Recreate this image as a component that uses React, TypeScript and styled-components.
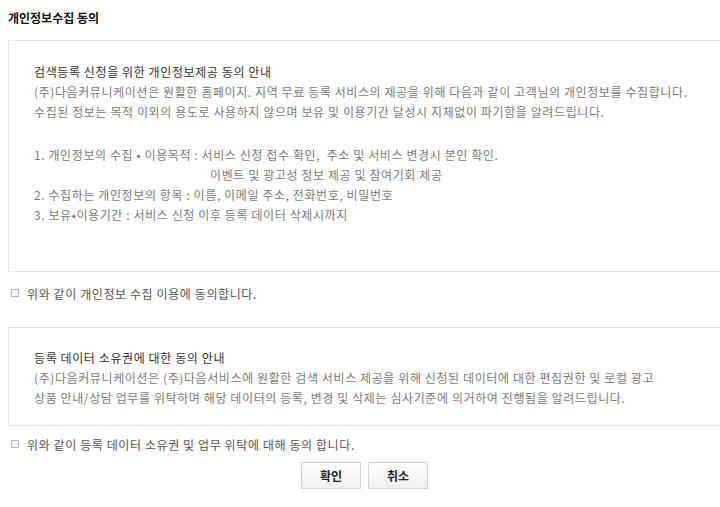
import React from "react";
import styled, { createGlobalStyle } from "styled-components";

const GlobalStyle = createGlobalStyle`
  body {
    margin: 0;
    background: #ffffff;
    font-family: "Noto Sans CJK KR", "Noto Sans", sans-serif;
  }
`;

const Page = styled.div`
  width: 720px;
  overflow: hidden;
`;

const Title = styled.h2`
  margin: 0;
  padding: 9px 0 0 8px;
  height: 40px;
  box-sizing: border-box;
  font-size: 12px;
  font-weight: bold;
  color: #111;
  line-height: 18px;
`;

const NoticeBox = styled.div<{ $height: number; $top: number }>`
  margin-left: 8px;
  width: 740px;
  height: ${({ $height }) => $height}px;
  box-sizing: border-box;
  border: 1px solid #e8e8e8;
  padding: ${({ $top }) => $top}px 0 0 25px;
  font-size: 12px;
  letter-spacing: 0.6px;
  line-height: 20px;
  color: #7a7a7a;
`;

const Heading = styled.div`
  color: #333;
`;

const Line = styled.div<{ $indent?: number }>`
  padding-left: ${({ $indent }) => $indent ?? 0}px;
  white-space: nowrap;
`;

const Spacer = styled.div<{ $h: number }>`
  height: ${({ $h }) => $h}px;
`;

const AgreeRow = styled.label<{ $height: number }>`
  display: flex;
  align-items: center;
  height: ${({ $height }) => $height}px;
  padding-left: 11px;
  font-size: 12px;
  letter-spacing: 0.6px;
  color: #555;
  gap: 8px;
`;

const CheckBox = styled.span`
  width: 6px;
  height: 6px;
  border: 1px solid #b5b5b5;
  background: #f7f7f7;
`;

const ButtonRow = styled.div`
  display: flex;
  justify-content: center;
  gap: 7px;
  padding-left: 9px;
`;

const Button = styled.button`
  width: 60px;
  height: 27px;
  border: 1px solid #d3d3d3;
  border-radius: 0;
  background: linear-gradient(#ffffff, #efefef);
  font-family: "Noto Sans CJK KR", sans-serif;
  font-size: 12px;
  font-weight: bold;
  color: #222;
  padding: 0;
`;

export default function App() {
  return (
    <Page>
      <GlobalStyle />
      <Title>개인정보수집 동의</Title>
      <NoticeBox $height={232} $top={21}>
        <Heading>검색등록 신청을 위한 개인정보제공 동의 안내</Heading>
        <Line>(주)다음커뮤니케이션은 원활한 홈페이지. 지역 무료 등록 서비스의 제공을 위해 다음과 같이 고객님의 개인정보를 수집합니다.</Line>
        <Line>수집된 정보는 목적 이외의 용도로 사용하지 않으며 보유 및 이용기간 달성시 지체없이 파기함을 알려드립니다.</Line>
        <Spacer $h={23} />
        <Line>1. 개인정보의 수집 • 이용목적 : 서비스 신청 접수 확인,&nbsp; 주소 및 서비스 변경시 본인 확인.</Line>
        <Line $indent={176}>이벤트 및 광고성 정보 제공 및 참여기회 제공</Line>
        <Line>2. 수집하는 개인정보의 항목 : 이름, 이메일 주소, 전화번호, 비밀번호</Line>
        <Line>3. 보유•이용기간 : 서비스 신청 이후 등록 데이터 삭제시까지</Line>
      </NoticeBox>
      <AgreeRow $height={42}>
        <CheckBox />
        위와 같이 개인정보 수집 이용에 동의합니다.
      </AgreeRow>
      <Spacer $h={13} />
      <NoticeBox $height={99} $top={20}>
        <Heading>등록 데이터 소유권에 대한 동의 안내</Heading>
        <Line>(주)다음커뮤니케이션은 (주)다음서비스에 원활한 검색 서비스 제공을 위해 신청된 데이터에 대한 편집권한 및 로컬 광고</Line>
        <Line>상품 안내/상담 업무를 위탁하며 해당 데이터의 등록, 변경 및 삭제는 심사기준에 의거하여 진행됨을 알려드립니다.</Line>
      </NoticeBox>
      <AgreeRow $height={36}>
        <CheckBox />
        위와 같이 등록 데이터 소유권 및 업무 위탁에 대해 동의 합니다.
      </AgreeRow>
      <ButtonRow>
        <Button>확인</Button>
        <Button>취소</Button>
      </ButtonRow>
    </Page>
  );
}
